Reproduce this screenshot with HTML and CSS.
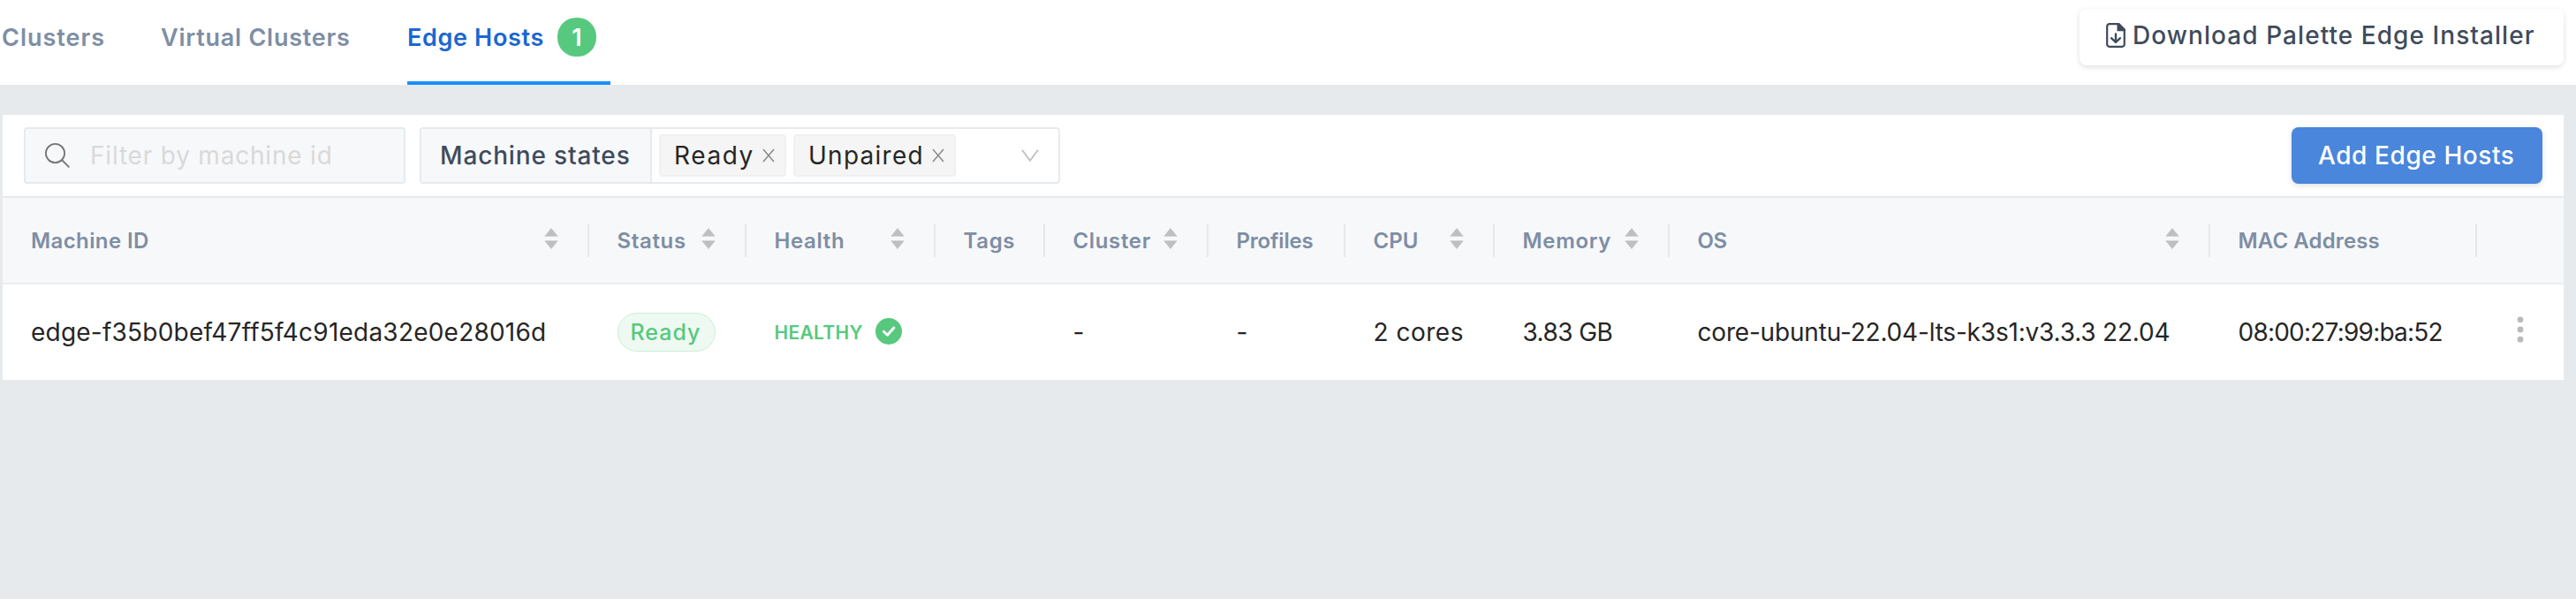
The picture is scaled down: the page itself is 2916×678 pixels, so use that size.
FILE: index.html
```html
<!DOCTYPE html>
<html lang="en">
<head>
<meta charset="utf-8">
<title>Edge Hosts</title>
<link rel="stylesheet" href="styles.css">
</head>
<body>
<svg class="defs" width="0" height="0">
  <symbol id="sorter" viewBox="0 0 16 24"><path d="M8 .5 15.2 9.3H.8zM8 23.5 15.2 14.7H.8z" fill="#bfbfbf" stroke="#bfbfbf" stroke-width=".6" stroke-linejoin="round"/></symbol>
  <symbol id="close" viewBox="0 0 14 16"><path d="M1 1 13 15M13 1 1 15" fill="none" stroke="#8c8c8c" stroke-width="1.6"/></symbol>
</svg>
<header class="topbar">
  <nav class="tabs">
    <a class="tab tab-clusters">Clusters</a>
    <a class="tab tab-virtual">Virtual Clusters</a>
    <a class="tab tab-active"><span class="tab-label">Edge Hosts</span><span class="badge">1</span></a>
  </nav>
  <button class="btn btn-download">
    <svg class="file-icon" width="22" height="28" viewBox="0 0 22 28"><path d="M13.5 1.1H4A2.7 2.7 0 0 0 1.2 3.800V24A2.700 2.700 0 0 0 4 26.900H18A2.700 2.700 0 0 0 20.800 24V8z" fill="none" stroke="#3f4b5c" stroke-width="2.200"/><path d="M12.500 0H15L22 7V9.200H12.500z" fill="#3f4b5c"/><path d="M11 12.500V21M6 17.200 11 21.800 16 17.200" fill="none" stroke="#3f4b5c" stroke-width="2.400" stroke-linecap="round" stroke-linejoin="round"/></svg>
    <span>Download Palette Edge Installer</span>
  </button>
</header>
<main class="card">
  <div class="toolbar">
    <div class="search">
      <svg width="28" height="28" viewBox="0 0 28 28"><g fill="none" stroke="#757575" stroke-width="1.800"><circle cx="11.500" cy="11.500" r="10.600"/><path d="M19 19 27.400 27.400"/></g></svg>
      <span>Filter by machine id</span>
    </div>
    <div class="states">
      <div class="states-label">Machine states</div>
      <div class="tag tag-ready"><span>Ready</span><svg width="14" height="16"><use href="#close"/></svg></div>
      <div class="tag tag-unpaired"><span>Unpaired</span><svg width="14" height="16"><use href="#close"/></svg></div>
      <svg class="chevron" width="20" height="14" viewBox="0 0 20 14"><path d="M1 .8 10 12.800 19 .8" fill="none" stroke="#bfbfbf" stroke-width="1.800"/></svg>
    </div>
    <button class="btn btn-add">Add Edge Hosts</button>
  </div>
  <div class="row head">
    <div class="th"><span class="h-machine">Machine ID</span><svg class="sorter"><use href="#sorter"/></svg></div>
    <div class="th"><span class="h-std">Status</span><svg class="sorter"><use href="#sorter"/></svg></div>
    <div class="th"><span class="h-std">Health</span><svg class="sorter"><use href="#sorter"/></svg></div>
    <div class="th"><span class="h-std">Tags</span></div>
    <div class="th"><span class="h-std">Cluster</span><svg class="sorter"><use href="#sorter"/></svg></div>
    <div class="th"><span class="h-profiles">Profiles</span></div>
    <div class="th"><span>CPU</span><svg class="sorter"><use href="#sorter"/></svg></div>
    <div class="th"><span class="h-std">Memory</span><svg class="sorter"><use href="#sorter"/></svg></div>
    <div class="th"><span class="h-os">OS</span><svg class="sorter"><use href="#sorter"/></svg></div>
    <div class="th"><span class="h-mac">MAC Address</span></div>
    <div class="th th-last"></div>
  </div>
  <div class="row body">
    <div class="td d-machine">edge-f35b0bef47ff5f4c91eda32e0e28016d</div>
    <div class="td"><span class="pill">Ready</span></div>
    <div class="td health"><span>HEALTHY</span><svg width="30" height="30" viewBox="0 0 30 30"><circle cx="15" cy="15" r="15" fill="#57c97f"/><path d="M9.300 15.300 13.500 19.300 20.900 11" fill="none" stroke="#fff" stroke-width="2.900" stroke-linecap="round" stroke-linejoin="round"/></svg></div>
    <div class="td"></div>
    <div class="td">-</div>
    <div class="td">-</div>
    <div class="td d-cpu">2 cores</div>
    <div class="td d-memory">3.83 GB</div>
    <div class="td d-os">core-ubuntu-22.04-lts-k3s1:v3.3.3 22.04</div>
    <div class="td d-mac">08:00:27:99:ba:52</div>
    <div class="td actions"><svg width="8" height="30" viewBox="0 0 8 30"><g fill="#bababa"><circle cx="4" cy="3.800" r="3.400"/><circle cx="4" cy="15" r="3.400"/><circle cx="4" cy="26.200" r="3.400"/></g></svg></div>
  </div>
</main>
</body>
</html>
```
FILE: styles.css
```css
* { box-sizing: border-box; }

body {
  margin: 0;
  height: 678px;
  overflow: hidden;
  background: #e6eaed;
  color: #262626;
  font-family: Inter, "Open Sans", sans-serif;
  font-size: 28px;
  white-space: nowrap;
}

svg { display: block; flex: none; }
.defs { position: absolute; }

.topbar {
  display: flex;
  justify-content: space-between;
  height: 96px;
  padding-right: 14px;
  background: #fff;
}

.tabs { display: flex; gap: 64px; padding-left: 2px; }

.tab {
  display: flex;
  align-items: center;
  height: 96px;
  padding-bottom: 12px;
  color: #7e8ea4;
  font-size: 27px;
  font-weight: 600;
}
.tab-clusters { width: 116px; letter-spacing: 1px; }
.tab-virtual { width: 215px; letter-spacing: 0.76px; }
.tab-active {
  width: 230px;
  padding-bottom: 8px;
  border-bottom: 4px solid #1890ff;
  color: #1a66d2;
}
.tab-label { width: 170px; letter-spacing: 0.65px; }

.badge {
  display: flex;
  align-items: center;
  justify-content: center;
  width: 44px;
  height: 44px;
  border-radius: 21px;
  background: #57c97f;
  color: #fff;
}

.btn {
  display: flex;
  align-items: center;
  height: 64px;
  padding: 0;
  border: 0;
  border-radius: 8px;
  font: inherit;
}
.btn-download {
  gap: 8px;
  width: 548px;
  margin-top: 10px;
  padding: 0 0 4px 30px;
  background: #fff;
  box-shadow: 0 2px 6px rgba(0, 0, 0, 0.13);
  color: #3f4b5c;
  font-weight: 500;
  letter-spacing: 1.06px;
}
.btn-add {
  width: 284px;
  margin-left: auto;
  padding-left: 30px;
  background: #4a86db;
  box-shadow: 0 2px 6px rgba(0, 0, 0, 0.13);
  color: #fff;
  font-weight: 500;
  letter-spacing: 0.58px;
}

.card { width: 2899px; margin: 34px 0 0 3px; background: #fff; }

.toolbar {
  display: flex;
  align-items: flex-start;
  gap: 16px;
  height: 94px;
  padding: 14px 24px 0;
  border-bottom: 2px solid #e6eaed;
}

.search {
  display: flex;
  align-items: center;
  gap: 23px;
  width: 432px;
  height: 64px;
  padding-left: 22px;
  border: 2px solid #e6eaed;
  border-radius: 4px;
  background: #f7f8fa;
  color: #d9d9d9;
  letter-spacing: 0.8px;
}

.states {
  display: flex;
  align-items: center;
  gap: 8px;
  width: 725px;
  height: 64px;
  border: 2px solid #e6eaed;
  border-radius: 4px;
}
.states-label {
  display: flex;
  align-items: center;
  width: 261px;
  height: 60px;
  padding-left: 21px;
  border-right: 2px solid #e6eaed;
  background: #f7f8fa;
  color: #3f4b5c;
  font-weight: 500;
  letter-spacing: 0.85px;
}

.tag {
  display: flex;
  align-items: center;
  justify-content: space-between;
  height: 48px;
  padding: 0 11px 0 15px;
  border: 2px solid #f0f0f0;
  border-radius: 4px;
  background: #f5f5f5;
}
.tag-ready { width: 144px; letter-spacing: 1.6px; }
.tag-unpaired { width: 184px; letter-spacing: 1.25px; }
.chevron { margin: 0 22px 0 auto; }

.row {
  display: grid;
  grid-template-columns: 664px 178px 214px 124px 185px 155px 169px 198px 612px 302px 98px;
}
.head {
  height: 98px;
  border-bottom: 2px solid #ecedef;
  border-radius: 4px 4px 0 0;
  background: #f7f8fa;
  color: #7e8ea4;
  font-size: 24px;
  font-weight: 600;
}
.body { height: 108px; }

.th, .td { display: flex; align-items: center; padding-left: 31.5px; }
.th:first-child, .td:first-child { padding-left: 32px; }
.th::after {
  content: "";
  width: 2px;
  height: 38px;
  margin-left: auto;
  background: #e6e8eb;
}
.th-last::after { display: none; }
.sorter { width: 16px; height: 24px; margin: 0 33px 4px auto; }
.th:has(.sorter)::after { margin-left: 0; }

.h-machine { letter-spacing: 0.4px; }
.h-std { letter-spacing: 0.65px; }
.h-profiles { letter-spacing: -0.19px; }
.h-os { letter-spacing: -0.45px; }
.h-mac { letter-spacing: 0.12px; }

.d-machine { letter-spacing: 0.22px; }
.d-cpu { letter-spacing: 0.5px; }
.d-memory { letter-spacing: -0.58px; }
.d-os { letter-spacing: -0.19px; }
.d-mac { letter-spacing: -0.78px; }

.pill {
  display: flex;
  align-items: center;
  width: 111px;
  height: 44px;
  padding-left: 14px;
  border: 1px solid #c9efd7;
  border-radius: 22px;
  background: #eef9f2;
  color: #57c97f;
  font-size: 25px;
  font-weight: 500;
  letter-spacing: 1px;
}

.health {
  gap: 14px;
  color: #57c97f;
  font-size: 21px;
  font-weight: 600;
  letter-spacing: 0.3px;
}
.health svg { margin-bottom: 2px; }

.td.actions { padding: 0 0 6px 45px; }
```
